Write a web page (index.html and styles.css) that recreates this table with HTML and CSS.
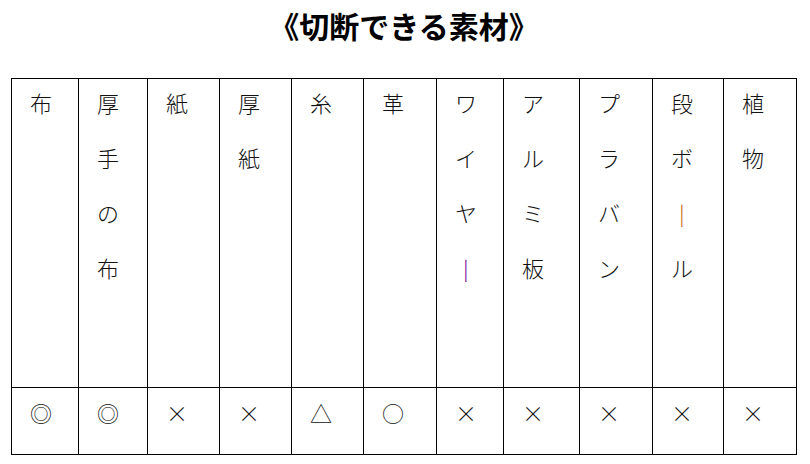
FILE: index.html
```html
<!DOCTYPE html>
<html lang="ja">
<head>
<meta charset="utf-8">
<link rel="stylesheet" href="styles.css">
</head>
<body>
<div class="page">
  <h1 class="title">《切断できる素材》</h1>
  <table class="materials">
    <colgroup>
      <col class="c67"><col class="c69"><col class="c72"><col class="c72"><col class="c72"><col class="c73"><col class="c67"><col class="c76"><col class="c73"><col class="c71"><col class="c73">
    </colgroup>
    <tr class="head">
      <td><div class="stack">布</div></td>
      <td><div class="stack">厚<br>手<br>の<br>布</div></td>
      <td><div class="stack">紙</div></td>
      <td><div class="stack">厚<br>紙</div></td>
      <td><div class="stack">糸</div></td>
      <td><div class="stack">革</div></td>
      <td><div class="stack">ワ<br>イ<br>ヤ<br><span class="bar purple">ー</span></div></td>
      <td><div class="stack">ア<br>ル<br>ミ<br>板</div></td>
      <td><div class="stack">プ<br>ラ<br>バ<br>ン</div></td>
      <td><div class="stack">段<br>ボ<br><span class="bar orange">ー</span><br>ル</div></td>
      <td><div class="stack">植<br>物</div></td>
    </tr>
    <tr class="marks">
      <td>◎</td>
      <td>◎</td>
      <td>×</td>
      <td>×</td>
      <td>△</td>
      <td>○</td>
      <td>×</td>
      <td>×</td>
      <td>×</td>
      <td>×</td>
      <td>×</td>
    </tr>
  </table>
</div>
</body>
</html>
```
FILE: styles.css
```css
html, body {
  margin: 0;
  padding: 0;
  background: #ffffff;
}

.page {
  padding: 0 0 0 11px;
  font-family: "Noto Sans CJK JP", "Noto Sans", sans-serif;
  color: #111111;
}

.title {
  width: 786px;
  margin: 0;
  padding-top: 5px;
  height: 78px;
  box-sizing: border-box;
  text-align: center;
  font-size: 30px;
  line-height: 40px;
  font-weight: 700;
  color: #000000;
}

.materials {
  border-collapse: collapse;
  table-layout: fixed;
  width: 786px;
}

.materials td {
  border: 1px solid #000000;
  vertical-align: top;
  padding: 0 0 0 18px;
  font-size: 22px;
  font-weight: 300;
  line-height: 55px;
}

.stack {
  margin-top: -4px;
}

.head td {
  height: 308px;
}

.marks td {
  height: 66px;
  line-height: 49px;
}

.c67 { width: 67px; }
.c69 { width: 69px; }
.c71 { width: 71px; }
.c72 { width: 72px; }
.c73 { width: 73px; }
.c76 { width: 76px; }

.bar {
  display: inline-block;
  writing-mode: vertical-rl;
  line-height: 22px;
  vertical-align: middle;
  transform: scaleY(1.3);
}

.purple { color: #8a2a9e; }
.orange { color: #d07a30; }
```
